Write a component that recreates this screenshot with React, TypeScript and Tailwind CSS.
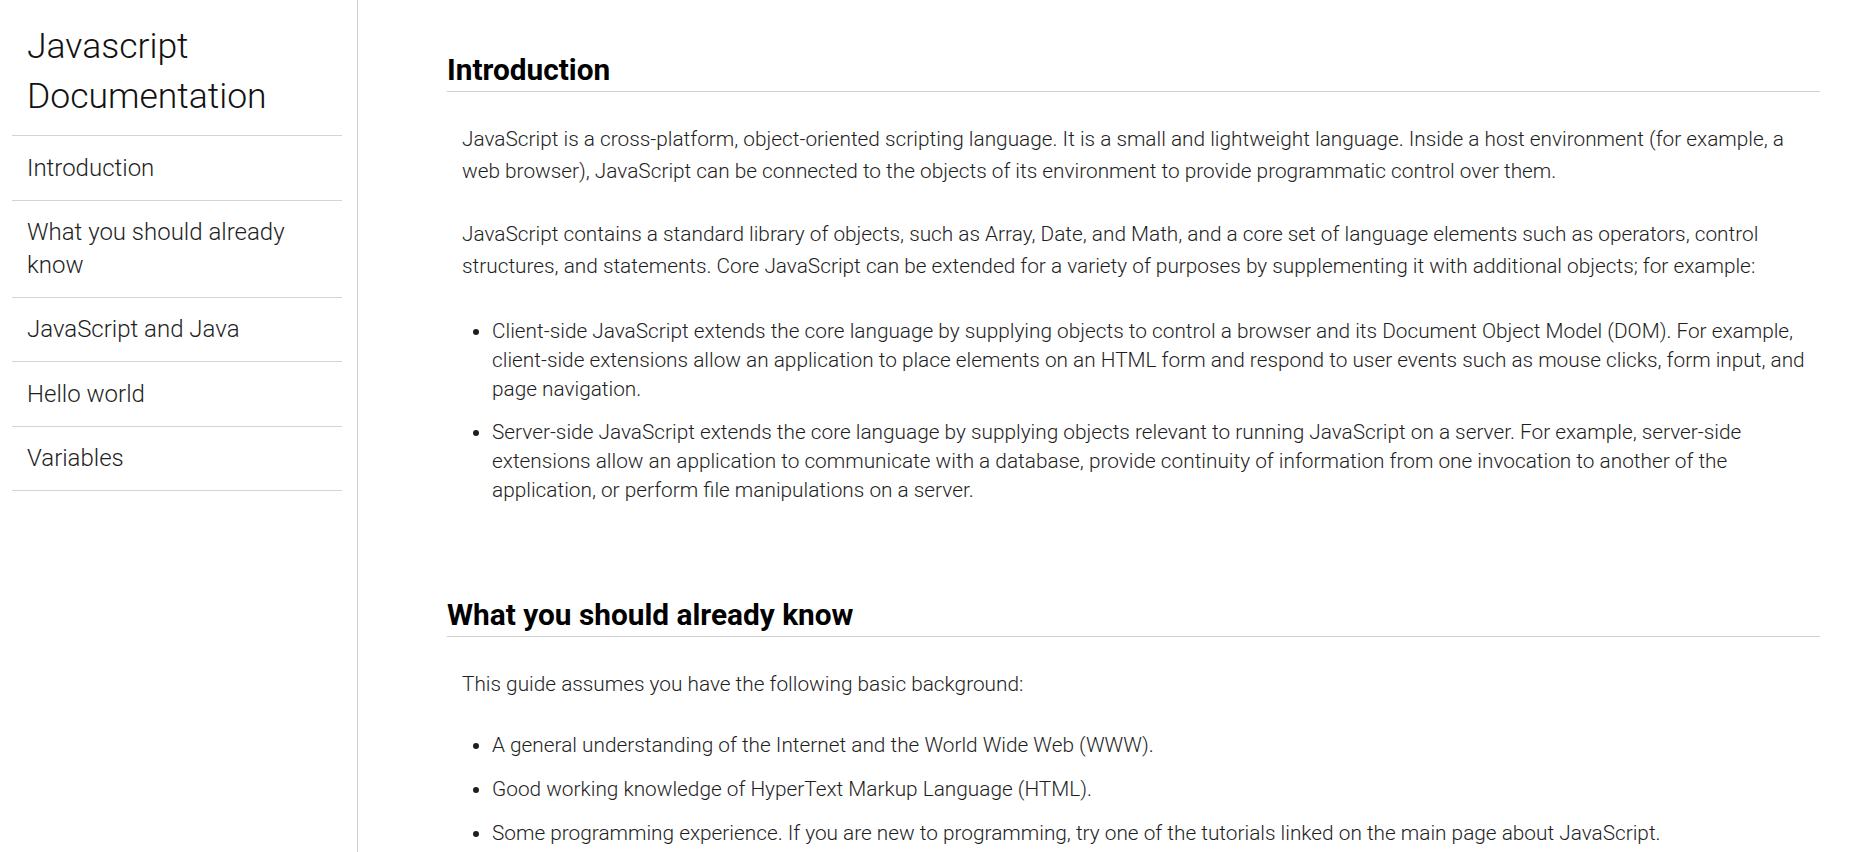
import React from "react";

const navItems = [
  "Introduction",
  "What you should already know",
  "JavaScript and Java",
  "Hello world",
  "Variables",
];

export default function App() {
  return (
    <div className="flex h-screen w-full overflow-hidden bg-white text-[#222] font-['Roboto',sans-serif]">
      <nav className="h-full w-[358px] shrink-0 border-r border-[#cfcfcf] pl-[12px] pr-[15px] font-light">
        <header className="border-b border-[#d4d4d4] pl-[15px] pt-[21px] pb-[14px] text-[35.5px] leading-[50px] text-[#111]">
          Javascript Documentation
        </header>
        <ul>
          {navItems.map((item) => (
            <li key={item} className="border-b border-[#d4d4d4] py-[15.5px] pl-[15px] pr-8 text-[24px] leading-[32.5px] text-[#1e1e1e]">
              {item}
            </li>
          ))}
        </ul>
      </nav>

      <main className="min-w-0 flex-1 pl-[89px] pr-[54px] pt-[52px]">
        <section>
          <h2 className="border-b border-[#d0d0d0] pb-[4px] text-[29.8px] font-bold leading-[35px] text-black">
            Introduction
          </h2>
          <div className="pl-[15px] font-light text-[20.8px] text-[#1e1e1e]">
            <p className="mt-[31px] leading-[32px]">
              JavaScript is a cross-platform, object-oriented scripting language. It is a small and lightweight language. Inside a host environment (for example, a web browser), JavaScript can be connected to the objects of its environment to provide programmatic control over them.
            </p>
            <p className="mt-[31px] leading-[32px]">
              JavaScript contains a standard library of objects, such as Array, Date, and Math, and a core set of language elements such as operators, control structures, and statements. Core JavaScript can be extended for a variety of purposes by supplementing it with additional objects; for example:
            </p>
          </div>
          <ul className="mt-[35px] list-disc pl-[45px] font-light text-[20.8px] leading-[29px] text-[#1e1e1e]">
            <li>
              Client-side JavaScript extends the core language by supplying objects to control a browser and its Document Object Model (DOM). For example, client-side extensions allow an application to place elements on an HTML form and respond to user events such as mouse clicks, form input, and page navigation.
            </li>
            <li className="mt-[14px]">
              Server-side JavaScript extends the core language by supplying objects relevant to running JavaScript on a server. For example, server-side extensions allow an application to communicate with a database, provide continuity of information from one invocation to another of the application, or perform file manipulations on a server.
            </li>
          </ul>
        </section>

        <section className="mt-[92px]">
          <h2 className="border-b border-[#d0d0d0] pb-[4px] text-[29.8px] font-bold leading-[35px] text-black">
            What you should already know
          </h2>
          <div className="pl-[15px] font-light text-[20.8px] text-[#1e1e1e]">
            <p className="mt-[31px] leading-[32px]">This guide assumes you have the following basic background:</p>
          </div>
          <ul className="mt-[31px] list-disc pl-[45px] font-light text-[20.8px] leading-[29px] text-[#1e1e1e]">
            <li>A general understanding of the Internet and the World Wide Web (WWW).</li>
            <li className="mt-[15px]">Good working knowledge of HyperText Markup Language (HTML).</li>
            <li className="mt-[15px]">
              Some programming experience. If you are new to programming, try one of the tutorials linked on the main page about JavaScript.
            </li>
          </ul>
        </section>
      </main>
    </div>
  );
}
